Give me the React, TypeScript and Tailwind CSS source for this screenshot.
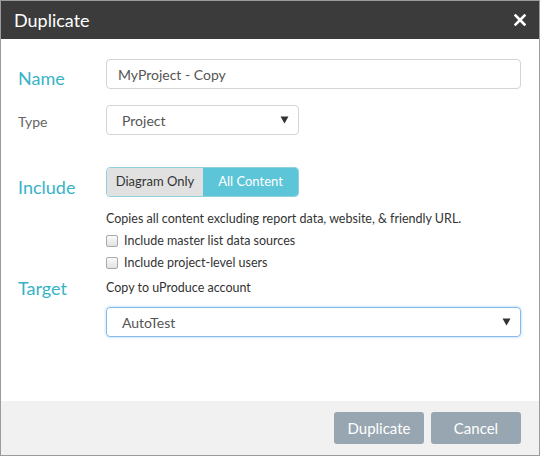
import { useState } from 'react';

const Caret = () => (
  <svg width="9" height="8" viewBox="0 0 9 8" className="shrink-0">
    <path d="M0.5 0.5 H8.5 L4.5 7.5 Z" fill="#333" />
  </svg>
);

const CheckRow = ({ label }: { label: string }) => (
  <label className="flex items-center gap-[6px] h-[22px] text-[12.5px] text-[#333]">
    <span className="w-[12px] h-[12px] rounded-[2px] border border-[#a9a9a9] bg-gradient-to-b from-[#fafafa] to-[#e2e2e2]" />
    {label}
  </label>
);

const App = () => {
  const [mode, setMode] = useState<'diagram' | 'all'>('all');
  const labelClass = "w-[88px] shrink-0 text-[18px] leading-[24px] text-[#38b3c6]";

  return (
    <div className="w-[540px] h-[456px] bg-white border border-[#9b9b9b] flex flex-col font-['Lato',sans-serif]">
      <div className="h-[38px] bg-[#3b3b3b] flex items-center justify-between pl-[13px] pr-[13px] shrink-0">
        <span className="text-white text-[18px]">Duplicate</span>
        <svg width="12" height="12" viewBox="0 0 12 12">
          <path d="M1.5 1.5 L10.5 10.5 M10.5 1.5 L1.5 10.5" stroke="white" strokeWidth="2.6" strokeLinecap="square" />
        </svg>
      </div>

      <div className="flex-1 pl-[17px] pr-[18px] pt-[20px]">
        <div className="flex items-center h-[30px]">
          <span className={`${labelClass} pt-[8px]`}>Name</span>
          <div className="flex-1 h-[30px] border border-[#d4d4d4] rounded-[4px] flex items-center px-[11px] text-[14px] text-[#555]">
            MyProject - Copy
          </div>
        </div>

        <div className="flex items-center h-[30px] mt-[16px]">
          <span className="w-[88px] shrink-0 text-[14px] text-[#666] pt-[3px]">Type</span>
          <div className="w-[193px] h-[30px] border border-[#d4d4d4] rounded-[4px] flex items-center justify-between pl-[15px] pr-[9px] text-[14px] text-[#555]">
            Project
            <Caret />
          </div>
        </div>

        <div className="flex items-center h-[30px] mt-[32px]">
          <span className={`${labelClass} pt-[10px]`}>Include</span>
          <div className="flex h-[30px] border border-[#8fd2de] rounded-[4px] overflow-hidden text-[13px]">
            <button
              onClick={() => setMode('diagram')}
              className={`w-[96px] ${mode === 'diagram' ? 'bg-[#5cc5d7] text-white' : 'bg-[#e1e1e1] text-[#333]'}`}
            >
              Diagram Only
            </button>
            <button
              onClick={() => setMode('all')}
              className={`w-[95px] ${mode === 'all' ? 'bg-[#5cc5d7] text-white' : 'bg-[#e1e1e1] text-[#333]'}`}
            >
              All Content
            </button>
          </div>
        </div>

        <div className="pl-[88px] mt-[11px]">
          <p className="text-[12.5px] text-[#333] h-[22px] leading-[22px]">
            Copies all content excluding report data, website, &amp; friendly URL.
          </p>
          <CheckRow label="Include master list data sources" />
          <CheckRow label="Include project-level users" />
        </div>

        <div className="flex items-center h-[28px]">
          <span className={labelClass}>Target</span>
          <span className="text-[12.5px] text-[#333]">Copy to uProduce account</span>
        </div>

        <div className="pl-[88px] mt-[5px]">
          <div className="h-[30px] border border-[#87b9ec] rounded-[4px] shadow-[0_0_3px_rgba(102,175,233,0.6)] flex items-center justify-between pl-[15px] pr-[9px] text-[14px] text-[#555]">
            AutoTest
            <Caret />
          </div>
        </div>
      </div>

      <div className="h-[54px] bg-[#f1f1f1] flex items-center justify-end gap-[7px] pr-[18px] shrink-0">
        <button className="w-[90px] h-[32px] rounded-[3px] bg-[#97a6b0] text-white text-[15px]">Duplicate</button>
        <button className="w-[90px] h-[32px] rounded-[3px] bg-[#97a6b0] text-white text-[15px]">Cancel</button>
      </div>
    </div>
  );
};

export default App;
